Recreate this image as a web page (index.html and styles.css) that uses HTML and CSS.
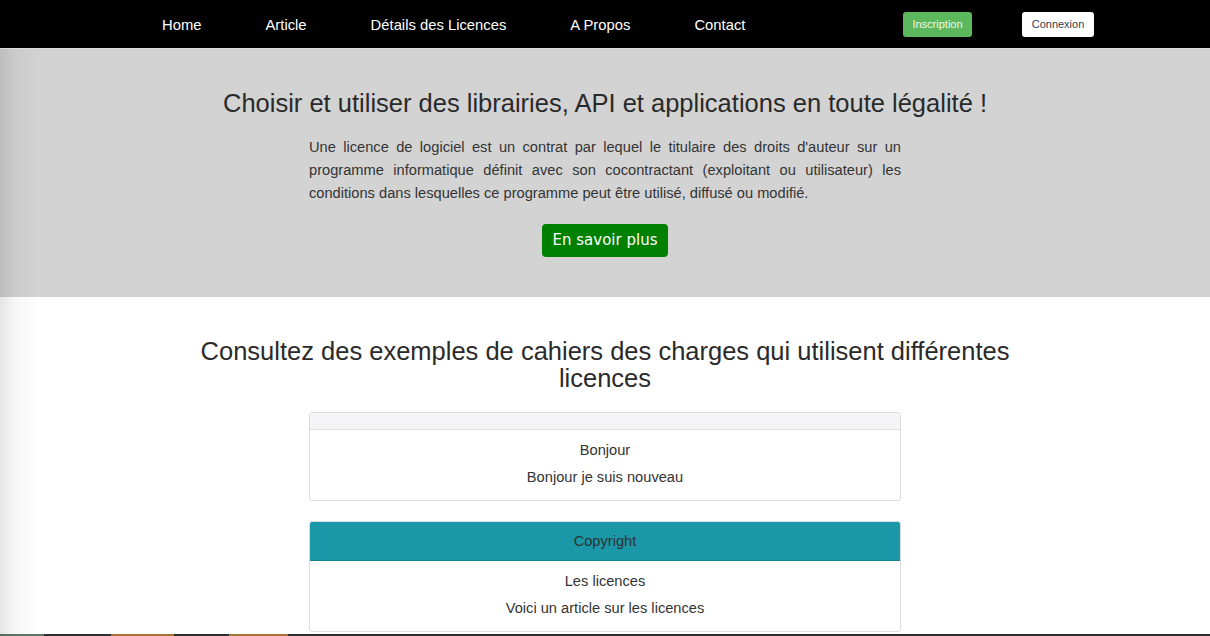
FILE: index.html
```html
<!DOCTYPE html>
<html lang="fr">
<head>
<meta charset="utf-8">
<title>Licences</title>
<link rel="stylesheet" href="styles.css">
</head>
<body>
<nav class="topbar">
  <ul class="menu">
    <li><a href="#">Home</a></li>
    <li><a href="#">Article</a></li>
    <li><a href="#">Détails des Licences</a></li>
    <li><a href="#">A Propos</a></li>
    <li><a href="#">Contact</a></li>
  </ul>
  <div class="auth">
    <a class="btn-sign" href="#">Inscription</a>
    <a class="btn-login" href="#">Connexion</a>
  </div>
</nav>
<header class="hero">
  <h1 class="hero-title">Choisir et utiliser des librairies, API et applications en toute légalité !</h1>
  <p class="hero-text">Une licence de logiciel est un contrat par lequel le titulaire des droits d'auteur sur un programme informatique définit avec son cocontractant (exploitant ou utilisateur) les conditions dans lesquelles ce programme peut être utilisé, diffusé ou modifié.</p>
  <a class="btn-more" href="#">En savoir plus</a>
</header>
<main class="examples">
  <h2 class="examples-title">Consultez des exemples de cahiers des charges qui utilisent différentes licences</h2>
  <div class="card">
    <div class="card-head card-head-empty"></div>
    <div class="card-body">
      <p>Bonjour</p>
      <p>Bonjour je suis nouveau</p>
    </div>
  </div>
  <div class="card">
    <div class="card-head card-head-teal">Copyright</div>
    <div class="card-body">
      <p>Les licences</p>
      <p>Voici un article sur les licences</p>
    </div>
  </div>
</main>
<div class="strip">
  <span class="seg seg-green"></span>
  <span class="seg seg-dark" style="width:67px"></span>
  <span class="seg seg-brown" style="width:63px"></span>
  <span class="seg seg-dark" style="width:55px"></span>
  <span class="seg seg-brown" style="width:59px"></span>
  <span class="seg seg-dark seg-fill"></span>
</div>
<div class="edge-shade"></div>
</body>
</html>
```

FILE: styles.css
```css
* { box-sizing: border-box; }
html, body { margin: 0; padding: 0; }
body {
  font-family: "Liberation Sans", Arial, sans-serif;
  color: #333;
  background: #fff;
  width: 1210px;
  overflow: hidden;
}
a { text-decoration: none; }

.topbar {
  height: 49px;
  background: #000;
  border-bottom: 1px solid #dcdcdc;
  display: flex;
  align-items: center;
}
.menu {
  list-style: none;
  margin: 0 0 0 130px;
  padding: 2px 0 0;
  display: flex;
}
.menu a {
  display: block;
  padding: 0 32px;
  color: #fff;
  font-size: 14.8px;
  line-height: 20px;
}
.auth {
  margin-left: auto;
  margin-right: 116px;
  display: flex;
  gap: 50px;
}
.btn-sign, .btn-login {
  display: block;
  height: 25px;
  line-height: 25px;
  font-size: 11px;
  border-radius: 3px;
  text-align: center;
}
.btn-sign {
  width: 69px;
  background: #5cb85c;
  color: #f0f8ee;
}
.btn-login {
  width: 72px;
  background: #fff;
  color: #2f3e4e;
}

.hero {
  background: #d3d3d3;
  padding: 39px 0 40px;
  text-align: center;
}
.hero-title {
  margin: 0;
  font-weight: normal;
  font-size: 25.5px;
  line-height: 31px;
  color: #2a2a2a;
}
.hero-text {
  width: 592px;
  margin: 17px auto 19px;
  font-size: 14.65px;
  line-height: 23px;
  text-align: justify;
  color: #333;
}
.btn-more {
  display: inline-block;
  width: 126px;
  height: 33px;
  line-height: 33px;
  background: #008000;
  color: #fff;
  border-radius: 4px;
  font-family: "DejaVu Sans", sans-serif;
  font-size: 15px;
}

.examples {
  padding-top: 41px;
  display: flex;
  flex-direction: column;
  align-items: center;
}
.examples-title {
  width: 830px;
  margin: 0 0 20px;
  font-weight: normal;
  font-size: 25.5px;
  line-height: 27px;
  text-align: center;
  color: #2a2a2a;
}
.card {
  width: 592px;
  border: 1px solid #dddddd;
  border-radius: 3px;
  margin-bottom: 20px;
  overflow: hidden;
}
.card:last-child { margin-bottom: 2px; }
.card-head-empty {
  height: 17px;
  background: #f5f5f7;
  border-bottom: 1px solid #dddddd;
}
.card-head-teal {
  height: 39px;
  background: #1b98a8;
  border-bottom: 1px solid #168593;
  text-align: center;
  font-size: 14.65px;
  line-height: 38px;
  color: #2b3333;
}
.card-body {
  padding: 12px 0 14px;
  display: flex;
  flex-direction: column;
  gap: 10px;
  text-align: center;
}
.card-body p {
  margin: 0;
  font-size: 14.65px;
  line-height: 17px;
  color: #333;
}

.strip {
  display: flex;
  height: 4px;
}
.seg { display: block; height: 4px; }
.seg-green { width: 44px; background: #5f7a62; }
.seg-dark { background: #2e2e2e; }
.seg-brown { background: #a8733a; }
.seg-fill { flex: 1; }

.edge-shade {
  position: fixed;
  left: 0;
  top: 49px;
  bottom: 0;
  width: 40px;
  background: linear-gradient(to right, rgba(0,0,0,0.1), rgba(0,0,0,0.03) 40%, rgba(0,0,0,0));
  pointer-events: none;
}
```
